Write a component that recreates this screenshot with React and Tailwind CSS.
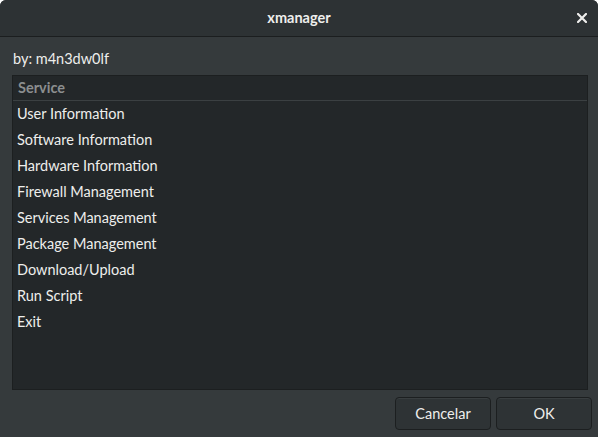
import React from 'react';

const services = [
    'User Information',
    'Software Information',
    'Hardware Information',
    'Firewall Management',
    'Services Management',
    'Package Management',
    'Download/Upload',
    'Run Script',
    'Exit',
];

const App = () => {
    return (
        <div
            className="w-[598px] h-[437px] bg-[#353a3c] flex flex-col text-[#eeeeec] overflow-hidden rounded-t-[6px]"
            style={{ fontFamily: 'Lato, "Noto Sans", sans-serif' }}
        >
            {/* header bar */}
            <div className="h-[37px] shrink-0 flex items-center justify-center relative bg-[#2d3234] border-b border-[#1b1e1f]">
                <span className="text-[14.5px] font-bold">xmanager</span>
                <button className="absolute right-[9px] top-[11px] w-[14px] h-[14px] flex items-center justify-center">
                    <svg width="10" height="10" viewBox="0 0 10 10">
                        <path d="M1 1 L9 9 M9 1 L1 9" stroke="#eeeeec" strokeWidth="2.2" strokeLinecap="square" />
                    </svg>
                </button>
            </div>

            <div className="flex-1 flex flex-col pl-[12px] pr-[10px]">
                <div className="h-[38px] flex items-center pl-[1px] pt-[5px] text-[14.5px]">by: m4n3dw0lf</div>

                <div className="h-[315px] bg-[#232729] border border-[#1c1f20] flex flex-col">
                    <div className="h-[25px] shrink-0 flex items-center px-[5px] text-[14.5px] font-bold text-[#8b8e8f] border-b border-[#3b4042]">
                        Service
                    </div>
                    {services.map((s) => (
                        <div key={s} className="h-[26px] shrink-0 flex items-center px-[4px] pb-[1px] text-[14.5px]">
                            {s}
                        </div>
                    ))}
                </div>

                <div className="flex justify-end gap-[5px] mt-[7px] mr-[-4px]">
                    <button className="w-[96px] h-[33px] rounded-[4px] border border-[#1c1f20] bg-[#2e3335] text-[14.5px] text-[#eeeeec] shadow-[inset_0_1px_0_#393e40]">
                        Cancelar
                    </button>
                    <button className="w-[96px] h-[33px] rounded-[4px] border border-[#1c1f20] bg-[#2e3335] text-[14.5px] text-[#eeeeec] shadow-[inset_0_1px_0_#393e40]">
                        OK
                    </button>
                </div>
            </div>
        </div>
    );
};

export default App;
